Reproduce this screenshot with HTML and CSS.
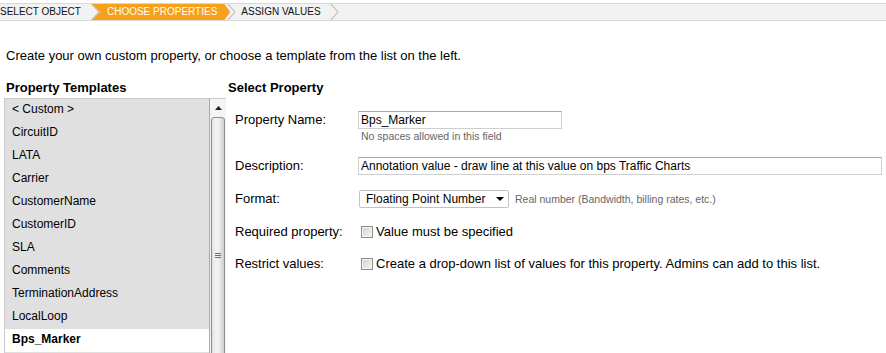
FILE: index.html
```html
<!DOCTYPE html>
<html lang="en">
<head>
    <meta charset="UTF-8">
    <title>Custom Property</title>
    <link rel="stylesheet" href="styles.css">
</head>
<body>
    <div class="steps">
        <span class="step">SELECT OBJECT</span>
        <svg class="step-sep" width="10" height="16" viewBox="0 0 10 16"><polyline points="1.5,0 9,8 1.5,16"/></svg>
        <span class="step current">CHOOSE PROPERTIES</span>
        <svg class="step-sep after-current" width="10" height="16" viewBox="0 0 10 16"><polyline points="1,0 8,8 1,16"/></svg>
        <span class="step next">ASSIGN VALUES</span>
        <svg class="step-sep" width="10" height="16" viewBox="0 0 10 16"><polyline points="1,0 8,8 1,16"/></svg>
    </div>

    <p class="intro">Create your own custom property, or choose a template from the list on the left.</p>

    <div class="editor">
        <h2 class="col-title">Property Templates</h2>
        <h2 class="col-title">Select Property</h2>

        <div class="templates">
            <ul class="template-list">
                <li>&lt; Custom &gt;</li>
                <li>CircuitID</li>
                <li>LATA</li>
                <li>Carrier</li>
                <li>CustomerName</li>
                <li>CustomerID</li>
                <li>SLA</li>
                <li>Comments</li>
                <li>TerminationAddress</li>
                <li>LocalLoop</li>
                <li class="selected">Bps_Marker</li>
            </ul>
            <div class="scrollbar">
                <div class="scroll-btn">
                    <svg width="7" height="4" viewBox="0 0 7 4"><polygon points="0,4 3.5,0 7,4"/></svg>
                </div>
                <div class="scroll-thumb">
                    <svg class="grip" width="6" height="5" viewBox="0 0 6 5"><path d="M0 0.5H6M0 2.5H6M0 4.5H6"/></svg>
                </div>
            </div>
        </div>

        <form class="property-form">
            <div class="field">
                <label class="field-label" for="propName">Property Name:</label>
                <div class="field-control">
                    <input id="propName" class="text-input name-input" type="text" value="Bps_Marker">
                    <div class="hint">No spaces allowed in this field</div>
                </div>
            </div>

            <div class="field">
                <label class="field-label" for="propDesc">Description:</label>
                <div class="field-control">
                    <input id="propDesc" class="text-input desc-input" type="text" value="Annotation value - draw line at this value on bps Traffic Charts">
                </div>
            </div>

            <div class="field">
                <span class="field-label">Format:</span>
                <div class="field-control inline">
                    <div class="select">
                        <span>Floating Point Number</span>
                        <svg width="8" height="4" viewBox="0 0 8 4"><polygon points="0,0 8,0 4,4"/></svg>
                    </div>
                    <span class="hint">Real number (Bandwidth, billing rates, etc.)</span>
                </div>
            </div>

            <div class="field">
                <span class="field-label">Required property:</span>
                <label class="check"><input type="checkbox">Value must be specified</label>
            </div>

            <div class="field last">
                <span class="field-label">Restrict values:</span>
                <label class="check"><input type="checkbox">Create a drop-down list of values for this property. Admins can add to this list.</label>
            </div>
        </form>
    </div>
</body>
</html>
```

FILE: styles.css
```css
:root {
    --font-family: 'Liberation Sans', Arial, sans-serif;
    --step-orange: #f6a01b;
    --list-gray: #e0e0e0;
    --line-gray: #c9c9c9;
}

* {
    box-sizing: border-box;
}

body {
    margin: 0;
    height: 353px;
    overflow: hidden;
    font-family: var(--font-family);
    font-size: 13px;
    color: #000;
    background: #fff;
}

/* wizard steps */
.steps {
    display: flex;
    align-items: stretch;
    height: 18px;
    margin-top: 3px;
    background: #f2f2f2;
    border-top: 1px solid #d8d8d8;
    border-bottom: 1px solid #d8d8d8;
}

.step {
    font-size: 10px;
    line-height: 16px;
    color: #111;
    padding: 0 9px 0 0;
    white-space: nowrap;
}

.step.current {
    margin-left: -8px;
    padding: 0 13px 0 15px;
    background: var(--step-orange);
    color: #fff;
    clip-path: polygon(0 0, calc(100% - 6px) 0, 100% 50%, calc(100% - 6px) 100%, 0 100%, 8px 50%);
}

.step.next {
    padding-left: 4px;
}

.step-sep {
    display: block;
    flex-shrink: 0;
}

.step-sep polyline {
    fill: none;
    stroke: #c4c4c4;
    stroke-width: 1.2;
}

.step-sep.after-current {
    margin-left: -3px;
}

.intro {
    margin: 27px 0 0 6px;
    line-height: 16px;
}

/* two column editor */
.editor {
    display: grid;
    grid-template-columns: 222px 1fr;
    margin: 16px 0 0 4px;
}

.col-title {
    margin: 0 0 2px;
    padding-left: 2px;
    font-size: 13px;
    line-height: 16px;
    font-weight: bold;
}

.templates {
    display: flex;
    height: 260px;
    overflow: hidden;
    background: var(--list-gray);
    border-top: 1px solid var(--line-gray);
    border-left: 1px solid var(--line-gray);
}

.template-list {
    flex: 1;
    margin: 0;
    padding: 0;
    list-style: none;
}

.template-list li {
    height: 23px;
    padding: 0 0 2px 7px;
    font-size: 12px;
    line-height: 21px;
    white-space: nowrap;
}

.template-list li.selected {
    background: #fff;
    font-weight: bold;
}

.scrollbar {
    flex: none;
    width: 17px;
    padding: 0 1px;
    background: #f4f4f4;
    border-left: 1px solid #a9a9a9;
}

.scroll-btn {
    height: 18px;
    display: flex;
    justify-content: center;
    align-items: center;
}

.scroll-btn polygon {
    fill: #222;
}

.scroll-thumb {
    height: 300px;
    display: flex;
    justify-content: center;
    padding-top: 135px;
    border: 1px solid #8d8d8d;
    border-radius: 3px 3px 0 0;
    background: linear-gradient(to right, #e2e2e2, #f4f4f4 35%, #ededed 60%, #cdcdcd);
}

.grip path {
    stroke: #6f6f6f;
    stroke-width: 1;
}

/* property form */
.property-form {
    margin: 0;
    padding: 13px 0 0 9px;
    background: #fff;
}

.field {
    display: grid;
    grid-template-columns: 123px auto;
    align-items: start;
}

.field + .field {
    margin-top: 15px;
}

.field.last {
    margin-top: 14px;
}

.field-label {
    line-height: 18px;
    white-space: nowrap;
}

.field-control.inline {
    display: flex;
    align-items: baseline;
    gap: 6px;
}

.text-input {
    display: block;
    height: 18px;
    margin: 0;
    padding: 0 2px;
    font-family: var(--font-family);
    font-size: 12px;
    color: #000;
    border: 1px solid #cfcfcf;
    border-top-color: #a9a9a9;
    outline: none;
}

.name-input {
    width: 204px;
}

.desc-input {
    width: 524px;
}

.hint {
    margin-top: 1px;
    padding-left: 3px;
    font-size: 10.5px;
    line-height: 12px;
    color: #666;
    white-space: nowrap;
}

.inline .hint {
    padding-left: 0;
}

.select {
    display: inline-flex;
    justify-content: space-between;
    align-items: center;
    width: 150px;
    height: 18px;
    margin-left: 1px;
    padding: 0 4px 0 6px;
    font-size: 12px;
    border: 1px solid #c2c2c2;
    border-radius: 2px;
    background: #fff;
}

.select polygon {
    fill: #000;
}

.check {
    display: flex;
    align-items: center;
    line-height: 18px;
    white-space: nowrap;
}

.check input {
    appearance: none;
    width: 12px;
    height: 12px;
    margin: 0 3px 0 3px;
    border: 1px solid #8e8f8f;
    background: linear-gradient(135deg, #d2d2d2, #f5f5f5);
    box-shadow: inset 0 0 0 1px #f2f2f2;
}
```
